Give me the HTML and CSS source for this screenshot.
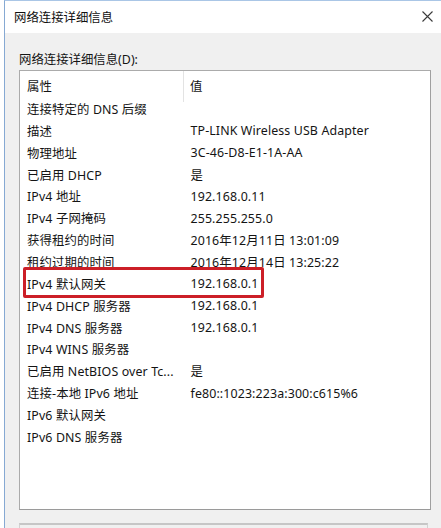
FILE: index.html
```html
<!DOCTYPE html>
<html lang="zh-CN">
<head>
<meta charset="utf-8">
<link rel="stylesheet" href="styles.css">
</head>
<body>
<div class="window">
  <div class="titlebar">
    <span class="title">网络连接详细信息</span>
    <svg class="close" width="11" height="11" viewBox="0 0 11 11"><path d="M0.5 0.5 L10.5 10.5 M10.5 0.5 L0.5 10.5" stroke="#3a3a3a" stroke-width="1.1" fill="none"/></svg>
  </div>
  <div class="content">
    <div class="label">网络连接详细信息(D):</div>
    <div class="listbox">
      <div class="header">
        <div class="hcell">属性</div>
        <div class="hcell hval">值</div>
      </div>
      <div class="row"><div class="k">连接特定的 DNS 后缀</div><div class="v"></div></div>
      <div class="row"><div class="k">描述</div><div class="v">TP-LINK Wireless USB Adapter</div></div>
      <div class="row"><div class="k">物理地址</div><div class="v">3C-46-D8-E1-1A-AA</div></div>
      <div class="row"><div class="k">已启用 DHCP</div><div class="v">是</div></div>
      <div class="row"><div class="k">IPv4 地址</div><div class="v">192.168.0.11</div></div>
      <div class="row"><div class="k">IPv4 子网掩码</div><div class="v">255.255.255.0</div></div>
      <div class="row"><div class="k">获得租约的时间</div><div class="v">2016年12月11日 13:01:09</div></div>
      <div class="row"><div class="k">租约过期的时间</div><div class="v">2016年12月14日 13:25:22</div></div>
      <div class="row marked"><div class="k">IPv4 默认网关</div><div class="v">192.168.0.1</div><div class="highlight"></div></div>
      <div class="row"><div class="k">IPv4 DHCP 服务器</div><div class="v">192.168.0.1</div></div>
      <div class="row"><div class="k">IPv4 DNS 服务器</div><div class="v">192.168.0.1</div></div>
      <div class="row"><div class="k">IPv4 WINS 服务器</div><div class="v"></div></div>
      <div class="row"><div class="k">已启用 NetBIOS over Tc...</div><div class="v">是</div></div>
      <div class="row"><div class="k">连接-本地 IPv6 地址</div><div class="v">fe80::1023:223a:300:c615%6</div></div>
      <div class="row"><div class="k">IPv6 默认网关</div><div class="v"></div></div>
      <div class="row"><div class="k">IPv6 DNS 服务器</div><div class="v"></div></div>
    </div>
    <div class="nextbox"></div>
  </div>
</div>
</body>
</html>
```
FILE: styles.css
```css
html, body {
  margin: 0;
  padding: 0;
  background: #ffffff;
  height: 528px;
  overflow: hidden;
}
body {
  font-family: "Noto Sans", "Noto Sans CJK SC", sans-serif;
  font-size: 12.4px;
  letter-spacing: 0.12px;
  color: #141414;
}
.window {
  margin-left: 4px;
  height: 528px;
  box-sizing: border-box;
  border-left: 1px solid #86a9d3;
  border-top: 1px solid #aac6e6;
  display: flex;
  flex-direction: column;
}
.titlebar {
  height: 32px;
  flex: none;
  background: #ffffff;
  display: flex;
  align-items: center;
  justify-content: space-between;
  padding: 0 8px 0 9px;
}
.title {
  font-size: 12.4px;
  letter-spacing: 0;
  color: #111;
  margin-top: -1px;
}
.close {
  margin-top: -1px;
}
.content {
  flex: 1;
  background: #f0f0f0;
  padding: 0 10px 0 14px;
  display: flex;
  flex-direction: column;
}
.label {
  height: 18px;
  line-height: 18px;
  margin-top: 18px;
  margin-bottom: 1px;
  letter-spacing: 0;
}
.listbox {
  height: 440px;
  flex: none;
  box-sizing: border-box;
  background: #ffffff;
  border: 1px solid #ababab;
  border-bottom-color: #9a9a9a;
  border-right-color: #a0a0a0;
}
.header {
  display: grid;
  grid-template-columns: 163px 1fr;
  align-items: start;
  height: 27px;
}
.hcell {
  height: 27px;
  box-sizing: border-box;
  padding: 3px 0 0 7px;
  display: flex;
  align-items: center;
}
.hval {
  border-left: 1px solid #e3e3e3;
  padding-left: 6px;
  height: 31px;
  padding-bottom: 4px;
}
.row {
  display: grid;
  grid-template-columns: 163px 1fr;
  height: 21.87px;
  align-items: center;
  position: relative;
  white-space: nowrap;
}
.k {
  padding-left: 7px;
}
.v {
  padding-left: 7.5px;
}
.highlight {
  position: absolute;
  left: 3px;
  top: -6px;
  width: 241px;
  height: 31px;
  box-sizing: border-box;
  border: 3px solid #cc1f27;
  border-radius: 2px;
}
.nextbox {
  margin-top: 13px;
  width: 409px;
  height: 10px;
  border-top: 2px solid #c6c6c6;
  border-left: 1px solid #d2d2d2;
  border-right: 1px solid #d2d2d2;
  box-sizing: border-box;
}
```
